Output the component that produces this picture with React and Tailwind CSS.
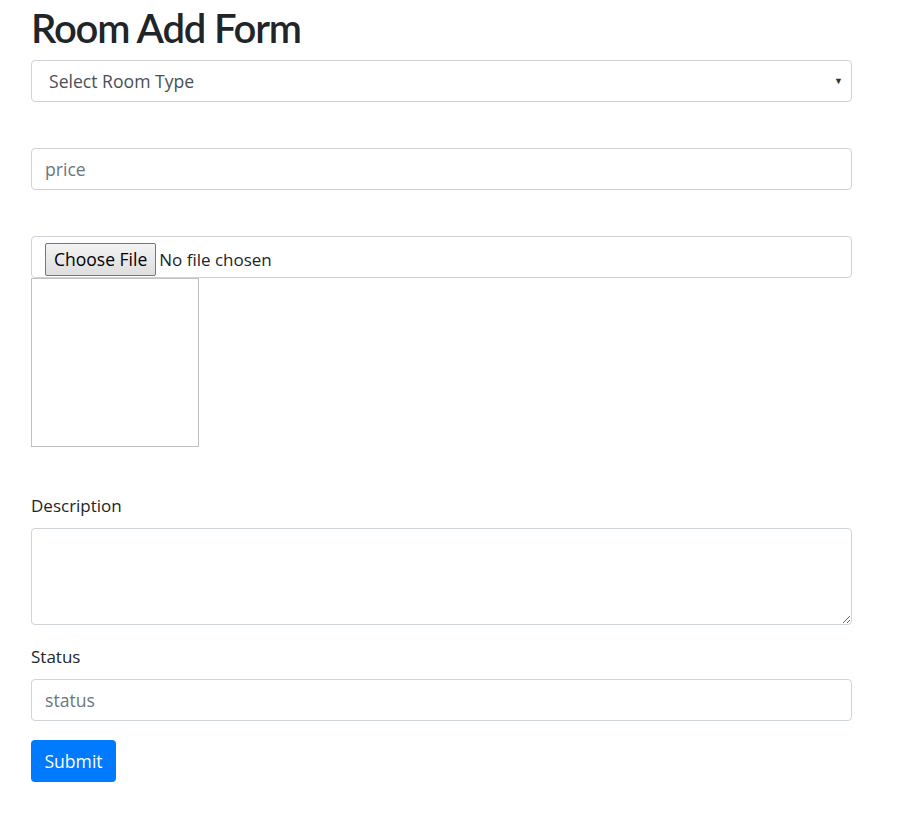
import { useState } from 'react';

const inputClass =
  'block w-full h-[42px] px-[13px] bg-white border border-[#ced4da] rounded-[4px] text-[17.6px] text-[#495057] placeholder:text-[#6c757d] outline-none';

const App = () => {
  const [form, setForm] = useState({ type: '', price: '', description: '', status: '' });

  const update = (field) => (e) => setForm({ ...form, [field]: e.target.value });

  return (
    <div className="min-h-screen bg-white" style={{ fontFamily: '"Open Sans", "Noto Sans", sans-serif' }}>
      <div className="w-[852px] pl-[31px]">
        <h1
          className="pt-[5px] text-[40px] leading-[47px] font-semibold tracking-[-1.2px] text-[#212529] mb-[8px]"
          style={{ fontFamily: 'Lato, "Open Sans", sans-serif' }}
        >
          Room Add Form
        </h1>

        {/* Room type */}
        <div className="relative mb-[46px]">
          <select
            value={form.type}
            onChange={update('type')}
            className="block w-full h-[42px] pl-[17px] pr-8 bg-white border border-[#ced4da] rounded-[4px] text-[17.6px] text-[#495057] appearance-none outline-none"
          >
            <option value="">Select Room Type</option>
            <option value="single">Single</option>
            <option value="double">Double</option>
          </select>
          <span className="pointer-events-none absolute right-[9px] top-1/2 -translate-y-1/2 text-[9px] text-[#333]">▼</span>
        </div>

        {/* Price */}
        <input type="text" value={form.price} onChange={update('price')} placeholder="price" className={`${inputClass} mb-[46px]`} />

        {/* Image upload */}
        <div className="h-[42px] border border-[#ced4da] rounded-[4px] flex items-start pt-[6px] pl-[13px]">
          <span className="h-[33px] px-[8px] flex items-center border border-[#767676] rounded-[2px] bg-gradient-to-b from-[#f3f3f3] to-[#dedede] text-[17.5px] text-black">
            Choose File
          </span>
          <span className="ml-[3px] h-[33px] flex items-center text-[17px] text-[#212529]">No file chosen</span>
        </div>
        <div className="w-[168px] h-[169px] border border-[#c0c0c0]" />

        {/* Description */}
        <label className="block mt-[46px] mb-[9px] text-[17px] leading-[26px] text-[#212529]">Description</label>
        <textarea
          value={form.description}
          onChange={update('description')}
          className="block w-full h-[97px] px-[13px] py-[6px] border border-[#ced4da] rounded-[4px] text-[17.6px] outline-none"
        />

        {/* Status */}
        <label className="block mt-[19px] mb-[9px] text-[17px] leading-[26px] text-[#212529]">Status</label>
        <input type="text" value={form.status} onChange={update('status')} placeholder="status" className={inputClass} />

        <button className="mt-[19px] h-[42px] w-[85px] rounded-[4px] bg-[#007bff] text-white text-[17.6px]">Submit</button>
      </div>
    </div>
  );
};

export default App;
